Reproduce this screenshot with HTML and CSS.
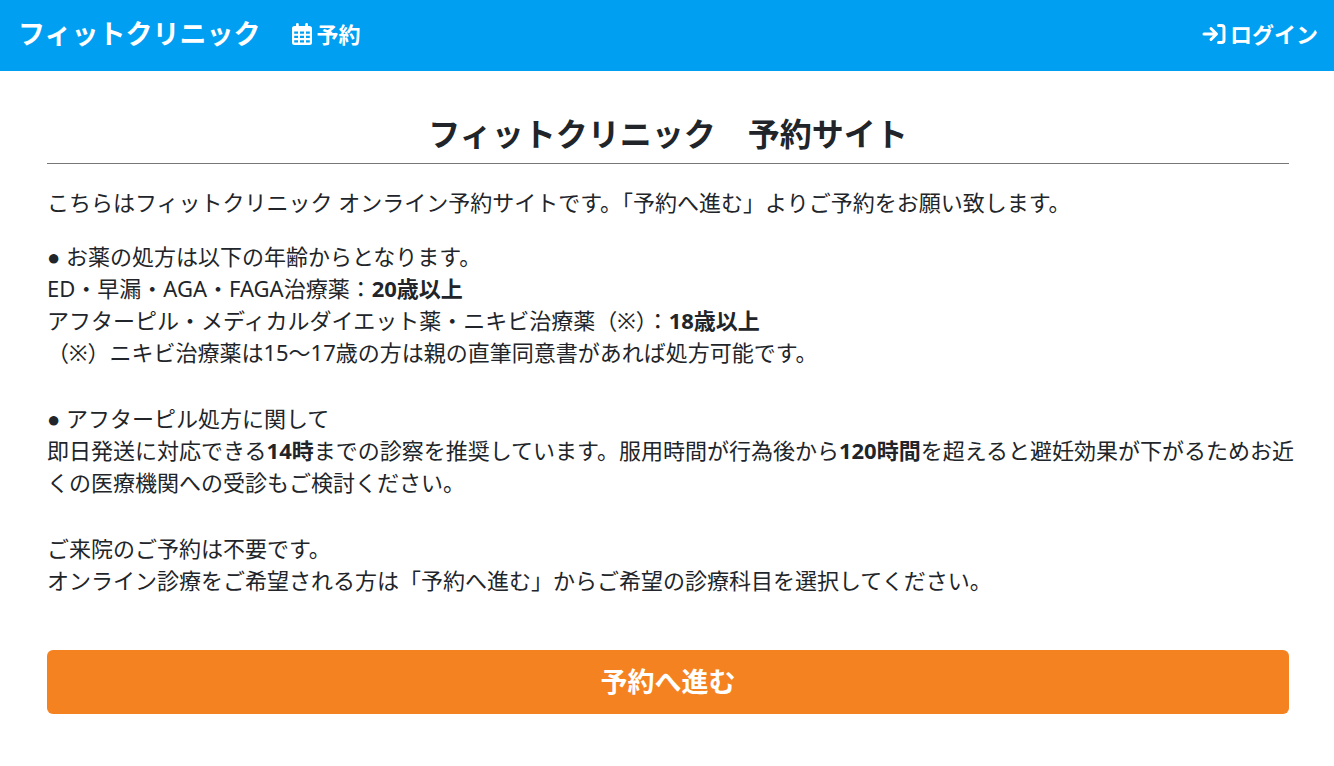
FILE: index.html
```html
<!DOCTYPE html>
<html lang="ja">
<head>
<meta charset="utf-8">
<meta name="viewport" content="width=device-width, initial-scale=1">
<title>フィットクリニック 予約サイト</title>
<link rel="stylesheet" href="styles.css">
</head>
<body>
<header class="navbar">
  <a class="brand" href="#">フィットクリニック</a>
  <nav class="nav">
    <a class="nav-link" href="#"><svg class="icon icon-calendar" viewBox="0 0 20 22" aria-hidden="true"><path fill="currentColor" fill-rule="evenodd" d="M4 3V1.400a1.400 1.400 0 0 1 2.800 0V3h6.400V1.400a1.400 1.400 0 0 1 2.800 0V3H17.500A2.500 2.500 0 0 1 20 5.500V19.500A2.500 2.500 0 0 1 17.500 22H2.500A2.500 2.500 0 0 1 0 19.500V5.500A2.500 2.500 0 0 1 2.500 3zM2.200 8.500h3.800v2.200H2.200zM8 8.500h4v2.200H8zM14 8.500h3.800v2.200H14zM2.200 12.800h3.800v2.300H2.200zM8 12.800h4v2.300H8zM14 12.800h3.800v2.300H14zM2.200 17.200h3.800v2.400H2.700a.5.5 0 0 1-.5-.5zM8 17.200h4v2.400H8zM14 17.200h3.800v1.900a.5.5 0 0 1-.5.5H14z"/></svg><span>予約</span></a>
    <a class="nav-link nav-login" href="#"><svg class="icon icon-login" viewBox="0 0 24 22" aria-hidden="true"><path fill="none" stroke="currentColor" stroke-width="3" stroke-linecap="round" stroke-linejoin="round" d="M2 11H14M9 5.500L14.500 11L9 16.500M16.500 2.500H19.500A2.500 2.500 0 0 1 22 5V17A2.500 2.500 0 0 1 19.500 19.500H16.500"/></svg><span>ログイン</span></a>
  </nav>
</header>
<main class="content">
  <h1 class="title">フィットクリニック　予約サイト</h1>
  <div class="notice">
    <p>こちらはフィットクリニック オンライン予約サイトです。「予約へ進む」よりご予約をお願い致します。</p>
    <section class="details">
      <p><span class="bullet">●</span> お薬の処方は以下の年齢からとなります。<br>
      ED・早漏・AGA・FAGA治療薬：<strong>20歳以上</strong><br>
      アフターピル・メディカルダイエット薬・ニキビ治療薬（※）：<strong>18歳以上</strong><br>
      （※）ニキビ治療薬は15～17歳の方は親の直筆同意書があれば処方可能です。</p>
      <p><span class="bullet">●</span> アフターピル処方に関して<br>
      即日発送に対応できる<strong>14時</strong>までの診察を推奨しています。服用時間が行為後から<strong>120時間</strong>を超えると避妊効果が下がるためお近くの医療機関への受診もご検討ください。</p>
      <p>ご来院のご予約は不要です。<br>
      オンライン診療をご希望される方は「予約へ進む」からご希望の診療科目を選択してください。</p>
    </section>
  </div>
  <button class="proceed" type="button">予約へ進む</button>
</main>
</body>
</html>
```
FILE: styles.css
```css
* {
  box-sizing: border-box;
}

body {
  margin: 0;
  background: #fff;
  color: #212529;
  font-family: "Noto Sans", "Noto Sans CJK JP", sans-serif;
  font-size: 22px;
  line-height: 32px;
}

p {
  margin: 0;
}

.navbar {
  display: flex;
  align-items: center;
  gap: 32px;
  padding: 16px 16px 20px 18px;
  background: #009ff2;
}

.brand {
  color: #fff;
  font-size: 27px;
  font-weight: 700;
  line-height: 35px;
  text-decoration: none;
}

.nav {
  display: flex;
  flex: 1;
}

.nav-link {
  display: flex;
  align-items: center;
  gap: 4px;
  color: #fff;
  font-weight: 700;
  line-height: 30px;
  text-decoration: none;
}

.nav-login {
  margin-left: auto;
}

.icon {
  height: 22px;
}

.icon-calendar {
  width: 20px;
}

.icon-login {
  width: 24px;
}

.content {
  padding: 40px 45px 52px 47px;
}

.title {
  margin: 0 0 22px;
  padding-bottom: 6px;
  border-bottom: 1px solid #777;
  font-size: 32px;
  line-height: 46px;
  text-align: center;
}

.notice {
  display: grid;
  gap: 22px;
  margin: 0 -8px 54px 0;
}

.details {
  display: grid;
  gap: 34px;
}

.bullet {
  font-family: "Liberation Sans", sans-serif;
  line-height: 1;
}

.proceed {
  display: block;
  width: 100%;
  padding: 12px;
  border: 0;
  border-radius: 6px;
  background: #f58220;
  color: #fff;
  font: inherit;
  font-size: 27px;
  font-weight: 700;
  line-height: 40px;
}
```
